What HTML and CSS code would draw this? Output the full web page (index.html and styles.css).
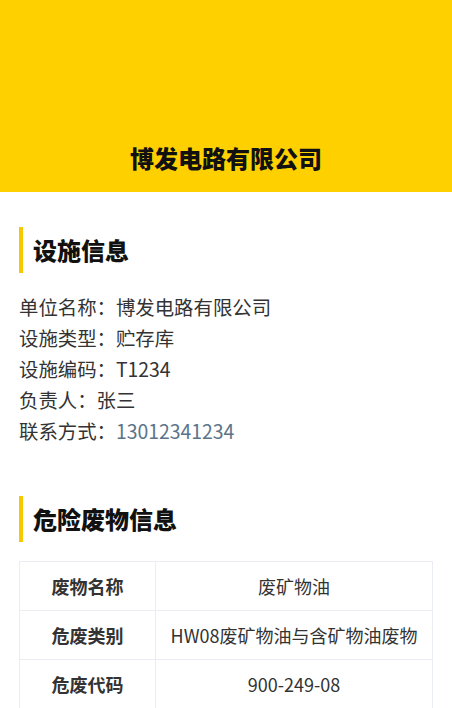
FILE: index.html
```html
<!DOCTYPE html>
<html lang="zh-CN">

<head>
    <meta charset="UTF-8">
    <meta name="viewport" content="width=device-width, initial-scale=1.0">
    <title>设施信息</title>
    <link rel="stylesheet" href="styles.css">
</head>

<body>

    <div class="header">
        <h1>博发电路有限公司</h1>
    </div>

    <div class="page">
        <!-- 设施信息 -->
        <h2 class="section-title">设施信息</h2>
        <div class="info">
            <p>单位名称：博发电路有限公司</p>
            <p>设施类型：贮存库</p>
            <p>设施编码：T1234</p>
            <p>负责人：张三</p>
            <p>联系方式：<a class="phone" href="tel:13012341234">13012341234</a></p>
        </div>

        <!-- 危险废物信息 -->
        <h2 class="section-title waste-title">危险废物信息</h2>
        <table class="waste">
            <tr>
                <th>废物名称</th>
                <td>废矿物油</td>
            </tr>
            <tr>
                <th>危废类别</th>
                <td>HW08废矿物油与含矿物油废物</td>
            </tr>
            <tr>
                <th>危废代码</th>
                <td>900-249-08</td>
            </tr>
        </table>
    </div>

</body>

</html>
```

FILE: styles.css
```css
body {
    margin: 0;
    font-family: "Noto Sans CJK SC", "Noto Sans", sans-serif;
    color: #333;
    background: #fff;
}

.header {
    height: 192px;
    background: #ffd000;
    display: flex;
    align-items: flex-end;
    justify-content: center;
    box-sizing: border-box;
    padding-bottom: 17px;
}

.header h1 {
    margin: 0;
    font-size: 24px;
    line-height: 34px;
    font-weight: 900;
    color: #111;
}

.page {
    padding: 0 19px;
}

.section-title {
    margin: 35px 0 0;
    border-left: 4px solid #f5c800;
    padding-left: 10px;
    font-size: 24px;
    line-height: 46px;
    font-weight: 900;
    color: #111;
}

.info {
    margin-top: 18px;
}

.info p {
    margin: 0;
    font-size: 19.4px;
    line-height: 31px;
}

.phone {
    color: #5b7489;
    text-decoration: none;
}

.waste-title {
    margin-top: 50px;
}

.waste {
    width: 100%;
    margin-top: 19px;
    border-collapse: collapse;
}

.waste th,
.waste td {
    height: 48px;
    padding: 0;
    border: 1px solid #eaeef2;
    font-size: 18px;
    text-align: center;
}

.waste th {
    width: 135px;
    font-weight: bold;
}
```
